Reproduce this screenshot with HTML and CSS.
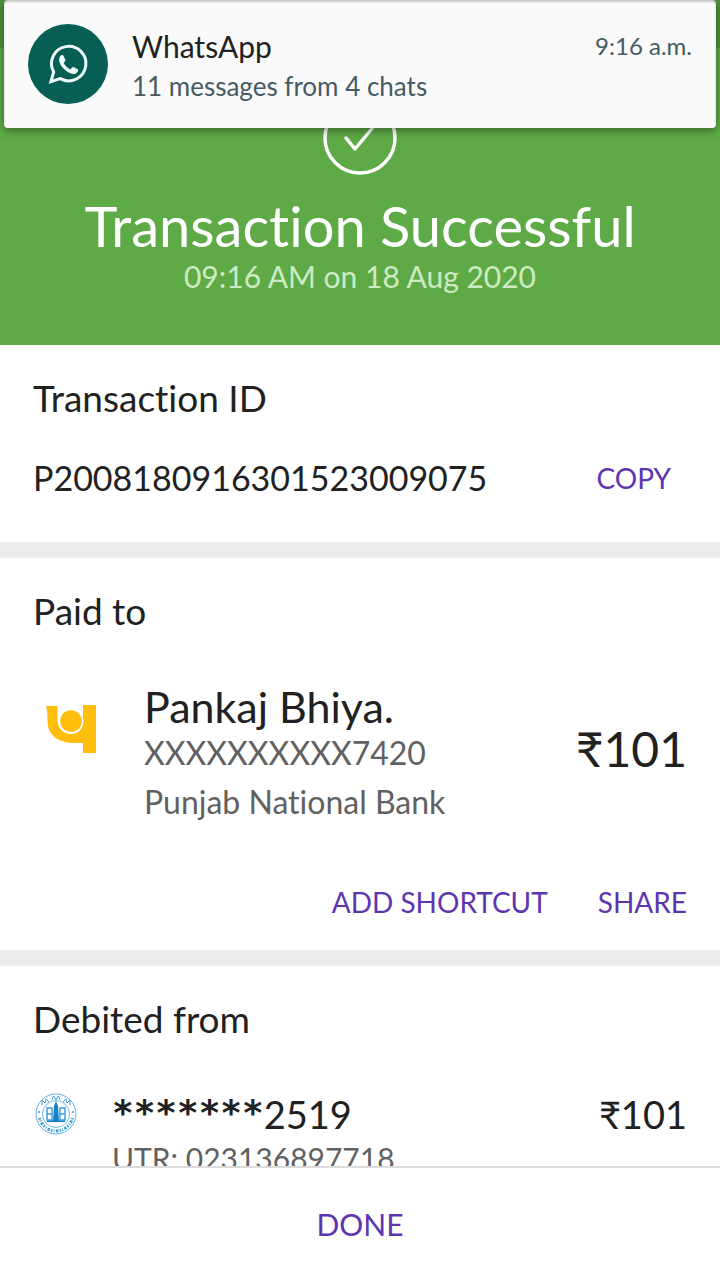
FILE: index.html
```html
<!DOCTYPE html>
<html lang="en">
<head>
<meta charset="utf-8">
<meta name="viewport" content="width=device-width, initial-scale=1">
<title>Transaction Successful</title>
<link rel="stylesheet" href="styles.css">
</head>
<body>
<aside class="notification">
  <svg class="app-icon" viewBox="0 0 80 80" aria-hidden="true">
    <circle cx="40" cy="40" r="40" fill="#075e54"/>
    <path d="M22.900 57.600L25.700 48A17.200 17.200 0 1 1 32.300 54.600Z" fill="none" stroke="#eefaf7" stroke-width="3" stroke-linejoin="miter"/>
    <path d="M32 32.500c1.300-1.700 2.800-2 3.700-.2l1.600 3.500c.4 1-.3 1.900-1.700 3.300 1.600 3 3.900 5 6.900 6.400 1.600-2.100 2.400-2.800 3.500-2.300l3.500 1.900c1.500 1 .3 3.300-1.500 4.300-3.200 1.700-8.300-.6-12-4.300-3.900-4-6.300-9.200-4-12.600z" fill="#eefaf7"/>
  </svg>
  <div class="notification-text">
    <div class="notification-title">WhatsApp</div>
    <div class="notification-message">11 messages from 4 chats</div>
  </div>
  <time class="notification-time">9:16 a.m.</time>
</aside>
<div class="screen">
  <main class="content">
    <header class="status">
      <svg class="check-icon" viewBox="0 0 76 76" aria-hidden="true">
        <g fill="none" stroke="#fff" stroke-width="3.500" stroke-linecap="round" stroke-linejoin="round">
          <circle cx="38" cy="38" r="35"/>
          <path d="M24 38l9 11 20-24"/>
        </g>
      </svg>
      <h1 class="status-title">Transaction Successful</h1>
      <p class="status-date">09:16 AM on 18 Aug 2020</p>
    </header>
    <section class="section">
      <h2 class="section-title">Transaction ID</h2>
      <div class="id-row">
        <span class="transaction-id">P2008180916301523009075</span>
        <button class="link-button copy" type="button">COPY</button>
      </div>
    </section>
    <section class="section">
      <h2 class="section-title">Paid to</h2>
      <div class="payee">
        <svg class="payee-logo" viewBox="0 0 50 50" aria-hidden="true">
          <path d="M0 1H11.500V15C11.500 23 17 29 25 29C32 29 37 24 37 17V0H50V48H37V38H29C12 38 2 30 1.500 17C1.300 10 1.500 5 0 1Z" fill="#ffbe0b"/>
          <circle cx="25" cy="16" r="12.500" fill="#fff"/>
          <circle cx="25" cy="16" r="10.800" fill="#ffbe0b"/>
        </svg>
        <div class="payee-details">
          <div class="payee-name">Pankaj Bhiya.</div>
          <div class="payee-account">XXXXXXXXXX7420</div>
          <div class="payee-bank">Punjab National Bank</div>
        </div>
        <div class="payee-amount">₹101</div>
      </div>
      <div class="actions">
        <button class="link-button" type="button">ADD SHORTCUT</button>
        <button class="link-button" type="button">SHARE</button>
      </div>
    </section>
    <section class="section">
      <h2 class="section-title">Debited from</h2>
      <div class="debit">
        <svg class="debit-logo" viewBox="0 0 42 42" aria-hidden="true">
          <g fill="none" stroke="#3b9fdc">
            <circle cx="21" cy="21" r="20" stroke-width=".8"/>
            <circle cx="21" cy="21" r="13.500" stroke-width=".7"/>
            <path d="M7 12l0-5 3 3 1-4 3 3M17 7l1.500-4 2.500 4 2.500-4 1.500 4M28 9l3-3 1 4 3-3 0 5" stroke-width="1"/>
            <path d="M4.500 25A17 17 0 0 0 37.500 25" stroke-width="3" stroke-dasharray="1.500 1.200 .8 1.500 2.500 1.200"/>
            <path d="M3 19h2M37 19h2" stroke-width="1.500"/>
            <path d="M12 15h5v12h-5zM25 15h5v12h-5zM12 21h5M25 21h5" stroke-width="1.500"/>
          </g>
          <path d="M21 8l2 5 1 15h-6l1-15zM12 27.500h18v1.500H12z" fill="#1681c9"/>
        </svg>
        <div class="debit-details">
          <div class="debit-account"><span class="mask">*******</span>2519</div>
          <div class="debit-utr">UTR: 023136897718</div>
        </div>
        <div class="debit-amount">₹101</div>
      </div>
    </section>
  </main>
  <footer class="footer">
    <button class="link-button done" type="button">DONE</button>
  </footer>
</div>
</body>
</html>
```
FILE: styles.css
```css
* { box-sizing: border-box; }

body {
  margin: 0;
  background: #fff;
  color: #212121;
  font-family: Lato, "Noto Sans", sans-serif;
  font-variant-ligatures: none;
}

h1, h2, p { margin: 0; font-weight: 400; }

.screen {
  display: flex;
  flex-direction: column;
  height: 100vh;
}

.content {
  flex: 1;
  min-height: 0;
  overflow: hidden;
}

.notification {
  position: absolute;
  top: 0;
  left: 4px;
  right: 4px;
  z-index: 1;
  display: flex;
  align-items: flex-start;
  padding: 24px;
  background: #fafafa;
  border-radius: 4px;
  box-shadow: 0 3px 8px rgba(0, 0, 0, 0.4), inset 0 2px 2px rgba(0, 0, 0, 0.2);
}

.app-icon { width: 80px; height: 80px; }

.notification-text { flex: 1; margin-left: 24px; }

.notification-title { font-size: 30px; line-height: 44px; }

.notification-message {
  color: #455a64;
  font-size: 26px;
  line-height: 36px;
}

.notification-time {
  color: #455a64;
  font-size: 24px;
  line-height: 44px;
}

.status {
  display: flex;
  flex-direction: column;
  align-items: center;
  padding: 100px 24px 48px;
  background: linear-gradient(#4c9038 48px, #5eaa46 48px);
  color: #fff;
  text-align: center;
}

.check-icon { width: 76px; height: 76px; }

.status-title {
  margin-top: 20px;
  font-size: 56px;
  line-height: 60px;
}

.status-date {
  color: #cdeac2;
  font-size: 30px;
  line-height: 41px;
}

.section { padding: 31px 33px 24px; }

.section + .section { border-top: 16px solid #ececec; }

.section-title { font-size: 37px; line-height: 44px; }

.id-row {
  display: flex;
  align-items: center;
  justify-content: space-between;
  padding: 33px 16px 15px 0;
}

.transaction-id { font-size: 34px; line-height: 50px; }

.link-button {
  padding: 0;
  border: 0;
  background: none;
  color: #5e35b1;
  font-family: inherit;
  font-size: 28px;
  line-height: 48px;
  cursor: pointer;
}

.payee {
  display: flex;
  margin-top: 50px;
}

.payee-logo {
  width: 50px;
  height: 50px;
  margin: 22px 48px 0 13px;
}

.payee-details { flex: 1; }

.payee-name { font-size: 43px; line-height: 48px; }

.payee-account {
  color: #616161;
  font-size: 32px;
  line-height: 44px;
}

.payee-bank {
  margin-top: 7px;
  color: #616161;
  font-size: 32px;
  line-height: 40px;
}

.payee-amount {
  align-self: center;
  padding-bottom: 8px;
  font-size: 48px;
  line-height: 56px;
}

.actions {
  display: flex;
  justify-content: flex-end;
  gap: 50px;
  margin-top: 56px;
}

.debit {
  display: flex;
  margin-top: 49px;
}

.debit-logo {
  width: 42px;
  height: 42px;
  margin: 3px 35px 0 2px;
}

.debit-details { flex: 1; }

.debit-account { font-size: 38px; line-height: 48px; }

.mask {
  font-family: "DejaVu Sans Mono", monospace;
  font-size: 36px;
  font-weight: 700;
  line-height: 1;
  vertical-align: 4px;
}

.debit-utr {
  color: #616161;
  font-size: 30px;
  line-height: 40px;
}

.debit-amount { font-size: 38px; line-height: 48px; }

.footer {
  padding: 24px 32px;
  border-top: 2px solid #dcdcdc;
  background: #fff;
}

.done {
  display: block;
  width: 100%;
  font-size: 30px;
  line-height: 64px;
}
```
